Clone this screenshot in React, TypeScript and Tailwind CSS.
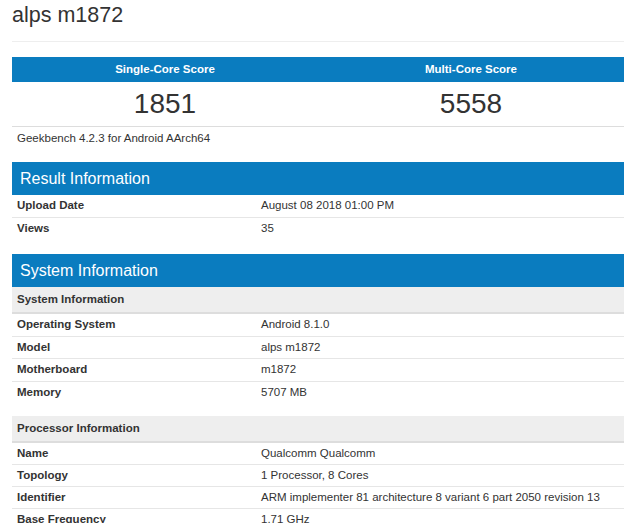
export default function App() {
  const resultRows = [
    { label: "Upload Date", value: "August 08 2018 01:00 PM" },
    { label: "Views", value: "35" },
  ]

  const systemRows = [
    { label: "Operating System", value: "Android 8.1.0" },
    { label: "Model", value: "alps m1872" },
    { label: "Motherboard", value: "m1872" },
    { label: "Memory", value: "5707 MB" },
  ]

  const processorRows = [
    { label: "Name", value: "Qualcomm Qualcomm" },
    { label: "Topology", value: "1 Processor, 8 Cores" },
    { label: "Identifier", value: "ARM implementer 81 architecture 8 variant 6 part 2050 revision 13" },
    { label: "Base Frequency", value: "1.71 GHz" },
  ]

  const Row = ({ label, value, last, tall }: { label: string; value: string; last?: boolean; tall?: boolean }) => (
    <div
      className={`flex items-center ${tall ? "h-[22.5px]" : "h-[22px]"} ${last ? "" : "border-b border-[#e6e6e6]"}`}
    >
      <div className="w-[244px] pl-[5px] font-bold">{label}</div>
      <div className="pl-[5px]">{value}</div>
    </div>
  )

  return (
    <div
      className="h-[523px] w-[640px] overflow-hidden bg-white text-[11.5px] text-[#333]"
      style={{ fontFamily: '"Liberation Sans", Arial, sans-serif' }}
    >
      <div className="mx-[12px] w-[612px]">
        {/* Title */}
        <div className="h-[42px] border-b border-[#eeeeee] pt-[2px] text-[21.5px] leading-[26px] text-[#333]">
          alps m1872
        </div>

        {/* Scores */}
        <div className="mt-[15px] border-b border-[#dddddd]">
          <div className="grid h-[25px] grid-cols-2 items-center bg-[#0a7cbf] font-bold text-white">
            <div className="text-center">Single-Core Score</div>
            <div className="text-center">Multi-Core Score</div>
          </div>
          <div className="grid h-[44px] grid-cols-2 items-center text-[28px] leading-none">
            <div className="text-center">1851</div>
            <div className="text-center">5558</div>
          </div>
        </div>
        <div className="flex h-[23px] items-center pl-[5px]">Geekbench 4.2.3 for Android AArch64</div>

        {/* Result Information */}
        <div className="mt-[12px] flex h-[33px] items-center bg-[#0a7cbf] pl-[8px] text-[16px] text-white">
          Result Information
        </div>
        {resultRows.map((r, i) => (
          <Row key={r.label} label={r.label} value={r.value} last={i === resultRows.length - 1} tall />
        ))}

        {/* System Information */}
        <div className="mt-[14px] flex h-[33px] items-center bg-[#0a7cbf] pl-[8px] text-[16px] text-white">
          System Information
        </div>
        <div className="flex h-[27px] items-center border-b-2 border-[#dddddd] bg-[#eeeeee] pl-[5px] font-bold">
          System Information
        </div>
        {systemRows.map((r, i) => (
          <Row key={r.label} label={r.label} value={r.value} last={i === systemRows.length - 1} tall />
        ))}

        <div className="mt-[12px] flex h-[27px] items-center border-b-2 border-[#dddddd] bg-[#eeeeee] pl-[5px] font-bold">
          Processor Information
        </div>
        {processorRows.map((r) => (
          <Row key={r.label} label={r.label} value={r.value} />
        ))}
      </div>
    </div>
  )
}
